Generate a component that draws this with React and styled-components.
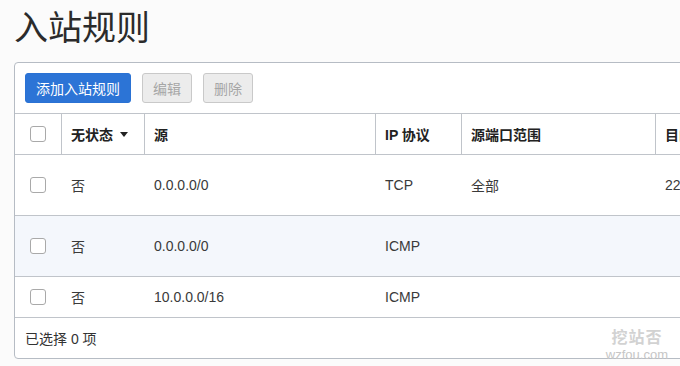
import React from "react";
import styled, { createGlobalStyle } from "styled-components";

const GlobalStyle = createGlobalStyle`
  html, body {
    margin: 0;
    padding: 0;
    background: #fbfbfb;
    overflow: hidden;
  }
  body {
    font-family: "Liberation Sans", "Noto Sans CJK SC", Arial, sans-serif;
    color: #333;
  }
`;

const Page = styled.div`
  position: relative;
  width: 680px;
  height: 366px;
  padding-left: 14px;
  box-sizing: border-box;
  overflow: hidden;
`;

const Title = styled.h1`
  margin: 6px 0 16px;
  font-size: 34px;
  line-height: 40px;
  font-weight: 400;
  color: #2b2b2b;
  font-family: "Noto Sans CJK SC", "Liberation Sans", sans-serif;
`;

const Panel = styled.div`
  width: 760px;
  background: #fff;
  border: 1px solid #b6bcc4;
  border-radius: 4px;
  overflow: hidden;
`;

const Toolbar = styled.div`
  display: flex;
  gap: 11px;
  padding: 10px;
  border-bottom: 1px solid #c0c4ca;
`;

const Button = styled.button`
  height: 30px;
  padding: 0 10px;
  border-radius: 3px;
  font-family: inherit;
  font-size: 14px;
  border: 1px solid ${p => (p.primary ? "#2a72d4" : "#c9c9c9")};
  background: ${p => (p.primary ? "#2c74d6" : "#ececec")};
  color: ${p => (p.primary ? "#fff" : "#a6a6a6")};
  cursor: ${p => (p.disabled ? "default" : "pointer")};
`;

const cols = "47px 83px 231px 86px 194px 1fr";

const HeaderRow = styled.div`
  display: grid;
  grid-template-columns: ${cols};
  height: 40px;
  border-bottom: 1px solid #c0c4ca;
`;

const HeadCell = styled.div`
  display: flex;
  align-items: center;
  justify-content: ${p => (p.center ? "center" : "flex-start")};
  padding: ${p => (p.center ? "0" : "0 10px 0 9px")};
  font-size: 14px;
  font-weight: 700;
  color: #222;
  border-right: ${p => (p.last ? "none" : "1px solid #c0c4ca")};
  white-space: nowrap;
`;

const Row = styled.div`
  display: grid;
  grid-template-columns: ${cols};
  height: ${p => p.h}px;
  background: ${p => (p.alt ? "#f4f7fc" : "#fff")};
  border-bottom: 1px solid #c0c4ca;
`;

const Cell = styled.div`
  display: flex;
  align-items: center;
  justify-content: ${p => (p.center ? "center" : "flex-start")};
  padding: ${p => (p.center ? "0 1px 0 0" : "0 11px 0 9px")};
  font-size: 14px;
  color: #3a3a3a;
  white-space: nowrap;
`;

const Checkbox = styled.span`
  display: inline-block;
  width: 14px;
  height: 14px;
  border: 1px solid #a9a9a9;
  border-radius: 3px;
  background: #fff;
`;

const SortArrow = styled.span`
  display: inline-block;
  margin-left: 7px;
  border-left: 4.5px solid transparent;
  border-right: 4.5px solid transparent;
  border-top: 5px solid #222;
`;

const Footer = styled.div`
  height: 40px;
  display: flex;
  align-items: center;
  padding-left: 10px;
  font-size: 14px;
  color: #333;
`;

const Watermark = styled.div`
  position: absolute;
  right: 12px;
  bottom: 5px;
  display: flex;
  flex-direction: column;
  align-items: center;
  color: #d2d2d2;
  line-height: 1;
`;

const MarkTitle = styled.span`
  font-family: "Noto Sans CJK SC", sans-serif;
  font-size: 16px;
  font-weight: 700;
  letter-spacing: 1px;
`;

const MarkSub = styled.span`
  margin-top: 4px;
  font-size: 13px;
  color: #c6c6c6;
`;

const rules = [
  { stateless: "否", source: "0.0.0.0/0", proto: "TCP", srcPort: "全部", dst: "22", h: 60 },
  { stateless: "否", source: "0.0.0.0/0", proto: "ICMP", srcPort: "", dst: "", h: 60, alt: true },
  { stateless: "否", source: "10.0.0.0/16", proto: "ICMP", srcPort: "", dst: "", h: 40 },
];

const App = () => {
  return (
    <Page>
      <GlobalStyle />
      <Title>入站规则</Title>
      <Panel>
        <Toolbar>
          <Button primary>添加入站规则</Button>
          <Button disabled>编辑</Button>
          <Button disabled>删除</Button>
        </Toolbar>
        <HeaderRow>
          <HeadCell center><Checkbox /></HeadCell>
          <HeadCell>无状态<SortArrow /></HeadCell>
          <HeadCell>源</HeadCell>
          <HeadCell>IP 协议</HeadCell>
          <HeadCell>源端口范围</HeadCell>
          <HeadCell last>目的地端口范围</HeadCell>
        </HeaderRow>
        {rules.map((r, i) => (
          <Row key={i} h={r.h} alt={r.alt}>
            <Cell center><Checkbox /></Cell>
            <Cell>{r.stateless}</Cell>
            <Cell>{r.source}</Cell>
            <Cell>{r.proto}</Cell>
            <Cell>{r.srcPort}</Cell>
            <Cell>{r.dst}</Cell>
          </Row>
        ))}
        <Footer>已选择 0 项</Footer>
      </Panel>
      <Watermark>
        <MarkTitle>挖站否</MarkTitle>
        <MarkSub>wzfou.com</MarkSub>
      </Watermark>
    </Page>
  );
};

export default App;
